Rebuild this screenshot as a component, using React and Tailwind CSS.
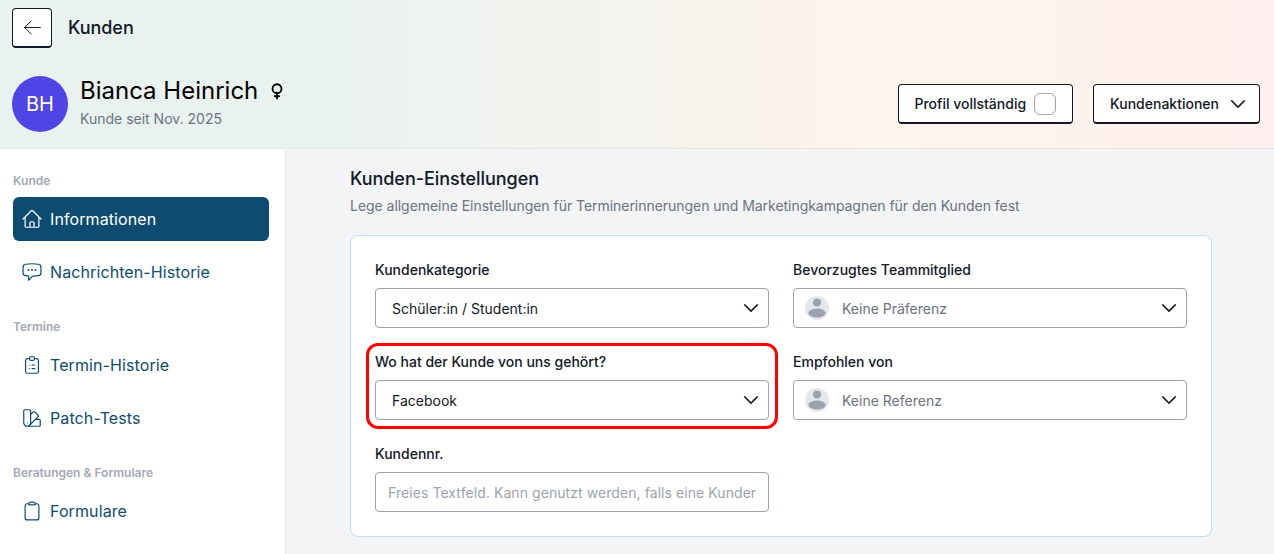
import React from "react";
import { HiOutlineHome, HiOutlineChatBubbleLeftEllipsis, HiOutlineSwatch, HiOutlineClipboard, HiOutlineArrowLeft, HiOutlineChevronDown } from "react-icons/hi2";
import { HiOutlineClipboardList } from "react-icons/hi";
import { Venus } from "lucide-react";

function NavItem({ icon: Icon, label, active }) {
  return (
    <div className={`flex h-11 items-center gap-[7px] rounded-md px-2 text-base tracking-[0.1px] ${active ? "bg-[#0d4c70] text-white" : "text-[#0d4c70]"}`}>
      <Icon className="h-[22px] w-[22px] shrink-0 stroke-[1.3]" />
      <span>{label}</span>
    </div>
  );
}

function SectionLabel({ children }) {
  return <div className="mb-2 flex h-4 items-center text-xs font-semibold text-[#a3a8b6]">{children}</div>;
}

function Chevron() {
  return <HiOutlineChevronDown className="h-5 w-5 shrink-0 stroke-[1.7] text-[#111827]" />;
}

function PersonAvatar() {
  return (
    <span className="flex h-6 w-6 shrink-0 items-center justify-center overflow-hidden rounded-full bg-[#e5e7eb]">
      <svg viewBox="0 0 24 24" className="h-6 w-6 text-[#9ca3af]" fill="currentColor">
        <circle cx="12" cy="6.5" r="4" />
        <ellipse cx="12" cy="17" rx="8.6" ry="4.6" />
      </svg>
    </span>
  );
}

function Field({ label, children }) {
  return (
    <div>
      <div className="mb-2 flex h-5 items-center text-sm font-medium text-[#111827]">{label}</div>
      {children}
    </div>
  );
}

function Select({ value, avatar }) {
  return (
    <div className={`flex h-10 items-center justify-between rounded border border-[#9ca3af] bg-white pr-[7px] text-sm ${avatar ? "pl-[11px]" : "pl-4"}`}>
      <span className={`flex items-center ${avatar ? "gap-[13px]" : ""}`}>
        {avatar && <PersonAvatar />}
        <span className={`pt-[2px] ${avatar ? "text-[#6b7280]" : "text-[#111827]"}`}>{value}</span>
      </span>
      <Chevron />
    </div>
  );
}

export default function App() {
  return (
    <div className="relative flex h-[554px] w-[1274px] flex-col overflow-hidden bg-[#f3f4f6] font-['Inter',sans-serif]">
      <header className="flex h-[149px] shrink-0 flex-col border-b border-[#e5e7eb] bg-[linear-gradient(90deg,#e9f2ef_25%,#fef4ec_70%,#fef0ee_100%)] px-3 pt-2">
        <div className="flex items-center gap-4">
          <div className="flex h-10 w-10 items-center justify-center rounded border border-[#111827] border-b-2 bg-white">
            <HiOutlineArrowLeft className="h-[21px] w-[21px] stroke-[1.1] text-[#111827]" />
          </div>
          <span className="text-lg font-medium tracking-[-0.05px] text-[#111827]">Kunden</span>
        </div>
        <div className="mt-7 flex items-start justify-between pr-[2px]">
          <div className="flex items-start gap-3">
            <div className="flex h-14 w-14 items-center justify-center rounded-full bg-[#4f46e5] text-xl text-white">BH</div>
            <div>
              <div className="flex items-center gap-[10px] pt-px text-2xl leading-7 text-black">
                <span>Bianca Heinrich</span>
                <Venus className="h-[18px] w-[18px]" strokeWidth={2.4} />
              </div>
              <div className="mt-1 text-sm leading-5 text-[#6b7280]">Kunde seit Nov. 2025</div>
            </div>
          </div>
          <div className="mt-2 flex items-center gap-5">
            <div className="flex h-10 items-center gap-2 rounded border border-[#111827] border-b-2 bg-white pl-[15px] pr-4 text-sm font-medium text-[#111827]">
              <span>Profil vollständig</span>
              <span className="h-[22px] w-[22px] rounded-md border border-[#9ca3af] bg-white" />
            </div>
            <div className="flex h-10 items-center gap-[9px] rounded border border-[#111827] border-b-2 bg-white pl-4 pr-[11px] text-sm font-medium text-[#111827]">
              <span>Kundenaktionen</span>
              <Chevron />
            </div>
          </div>
        </div>
      </header>
      <div className="flex min-h-0 flex-1">
        <aside className="w-[286px] shrink-0 border-r border-[#e5e7eb] bg-white pl-[13px] pr-4 pt-6">
          <SectionLabel>Kunde</SectionLabel>
          <div className="flex flex-col gap-[9px]">
            <NavItem icon={HiOutlineHome} label="Informationen" active />
            <NavItem icon={HiOutlineChatBubbleLeftEllipsis} label="Nachrichten-Historie" />
          </div>
          <div className="mt-[25px]">
            <SectionLabel>Termine</SectionLabel>
            <div className="flex flex-col gap-[9px]">
              <NavItem icon={HiOutlineClipboardList} label="Termin-Historie" />
              <NavItem icon={HiOutlineSwatch} label="Patch-Tests" />
            </div>
          </div>
          <div className="mt-[25px]">
            <SectionLabel>Beratungen &amp; Formulare</SectionLabel>
            <NavItem icon={HiOutlineClipboard} label="Formulare" />
          </div>
        </aside>
        <main className="min-w-0 flex-1 pl-[64px] pr-[62px] pt-[18px]">
          <h2 className="text-lg font-medium leading-6 tracking-[-0.05px] text-[#111827]">Kunden-Einstellungen</h2>
          <p className="mt-[5px] text-sm leading-5 tracking-[-0.04px] text-[#6b7280]">Lege allgemeine Einstellungen für Terminerinnerungen und Marketingkampagnen für den Kunden fest</p>
          <div className="relative mt-[19px] rounded-lg border border-[#bfdbfe] bg-white p-6">
            <div className="grid grid-cols-2 gap-x-6 gap-y-6">
              <Field label="Kundenkategorie"><Select value="Schüler:in / Student:in" /></Field>
              <Field label="Bevorzugtes Teammitglied"><Select value="Keine Präferenz" avatar /></Field>
              <Field label="Wo hat der Kunde von uns gehört?"><Select value="Facebook" /></Field>
              <Field label="Empfohlen von"><Select value="Keine Referenz" avatar /></Field>
              <Field label="Kundennr.">
                <div className="flex h-10 items-center overflow-hidden whitespace-nowrap rounded border border-[#9ca3af] bg-white px-3 pt-[2px] text-sm tracking-[0.07px] text-[#9ca3af]">
                  Freies Textfeld. Kann genutzt werden, falls eine Kunder
                </div>
              </Field>
            </div>
            <div className="absolute left-[15px] top-[107px] h-[86px] w-[412px] rounded-xl border-[3px] border-[#ff0000]" />
          </div>
        </main>
      </div>
    </div>
  );
}
